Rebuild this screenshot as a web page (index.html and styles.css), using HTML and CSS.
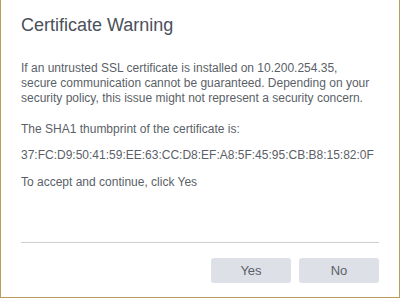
FILE: index.html
```html
<!DOCTYPE html>
<html lang="en">
<head>
  <title>Certificate Warning</title>
  <link rel="stylesheet" href="styles.css">
</head>
<body>

  <div class="dialog">
    <h1 class="title">Certificate Warning</h1>

    <div class="content">
      <p class="intro">If an untrusted SSL certificate is installed on 10.200.254.35,<br>secure communication cannot be guaranteed. Depending on your<br>security policy, this issue might not represent a security concern.</p>
      <p class="label">The SHA1 thumbprint of the certificate is:</p>
      <p class="thumbprint">37:FC:D9:50:41:59:EE:63:CC:D8:EF:A8:5F:45:95:CB:B8:15:82:0F</p>
      <p class="hint">To accept and continue, click Yes</p>
    </div>

    <div class="footer">
      <button class="btn">Yes</button>
      <button class="btn">No</button>
    </div>
  </div>

</body>
</html>
```

FILE: styles.css
```css
html, body {
  margin: 0;
  padding: 0;
  background: #fff;
}

body {
  font-family: "Liberation Sans", Arial, sans-serif;
  color: #5b5f68;
}

.dialog {
  box-sizing: border-box;
  width: 400px;
  height: 298px;
  padding: 0 20px;
  border: 1px solid #bb9d5e;
  border-top: none;
  display: flex;
  flex-direction: column;
  background: #fff;
}

.title {
  margin: 15px 0 0 0;
  font-size: 18px;
  font-weight: normal;
  line-height: 21px;
  color: #4b505a;
}

.content {
  flex: 1;
  padding-top: 25px;
  font-size: 12px;
  line-height: 15px;
}

.content p {
  margin: 0;
}

.intro {
  margin-bottom: 16px !important;
}

.label {
  margin-bottom: 11px !important;
}

.thumbprint {
  margin-bottom: 12px !important;
}

.footer {
  border-top: 1px solid #cfcfcf;
  margin-bottom: 14px;
  padding-top: 15px;
  display: flex;
  justify-content: flex-end;
  gap: 8px;
}

.btn {
  width: 80px;
  height: 25px;
  border: none;
  border-radius: 3px;
  background: #dde1e7;
  color: #5b5f68;
  font-family: inherit;
  font-size: 13px;
  padding: 0;
  cursor: pointer;
}

.btn:hover {
  background: #d0d5dc;
}
```
